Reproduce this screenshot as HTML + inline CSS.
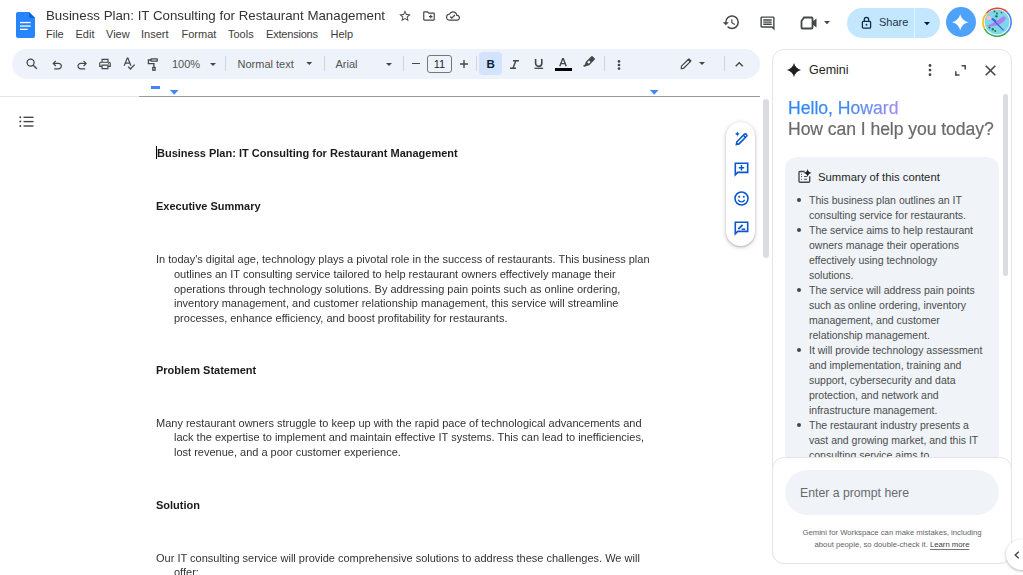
<!DOCTYPE html>
<html><head><meta charset="utf-8">
<style>
*{margin:0;padding:0;box-sizing:border-box}
html,body{width:1023px;height:575px;overflow:hidden;background:#fff;font-family:"Liberation Sans",sans-serif;color:#1f1f1f}
.a{position:absolute;white-space:nowrap}
svg{position:absolute;overflow:visible}
#title{left:46px;top:8px;font-size:13.3px;line-height:16px;color:#333;will-change:transform}
.mn{position:absolute;top:28.4px;font-size:11px;line-height:13px;color:#3c3c3c}
#toolbar{left:12px;top:49px;width:748px;height:30px;border-radius:15px;background:#eef2fa}
.tb{position:absolute;font-size:11px;line-height:13px;color:#505352}
.sep{position:absolute;width:1px;height:14.5px;background:#d2d5da;top:56.3px}
#ruler{left:0;top:96px;width:760px;height:1px;background:#dadce0}
.doc{font-size:11px;color:#333;will-change:transform;line-height:14.5px}
.h{font-weight:bold;color:#1a1a1a}
#gp{left:772px;top:48.7px;width:240px;height:515.3px;border:1px solid #e6e6e6;border-radius:12px;background:#fff}
</style></head><body>

<!-- Docs logo -->
<svg style="left:16px;top:12px" width="19" height="26" viewBox="0 0 19 26">
 <path d="M2 0h11l6 6v18a2 2 0 0 1-2 2H2a2 2 0 0 1-2-2V2a2 2 0 0 1 2-2z" fill="#2684fc"/>
 <path d="M13 0l6 6h-4a2 2 0 0 1-2-2z" fill="#0066da"/>
 <rect x="4" y="9.9" width="10.7" height="1.3" fill="#fff"/>
 <rect x="4" y="13.4" width="10.7" height="1.3" fill="#fff"/>
 <rect x="4" y="16.7" width="7.7" height="1.3" fill="#fff"/>
</svg>
<div class="a" id="title">Business Plan: IT Consulting for Restaurant Management</div>
<div class="mn" style="left:46px">File</div>
<div class="mn" style="left:75.5px">Edit</div>
<div class="mn" style="left:106px">View</div>
<div class="mn" style="left:141px">Insert</div>
<div class="mn" style="left:181.5px">Format</div>
<div class="mn" style="left:228px">Tools</div>
<div class="mn" style="left:266px;letter-spacing:-0.2px">Extensions</div>
<div class="mn" style="left:330.5px">Help</div>

<!-- title icons -->
<svg style="left:398px;top:9px" width="14" height="14" viewBox="0 0 24 24"><path fill="#444746" d="M22 9.24l-7.19-.62L12 2 9.19 8.63 2 9.24l5.46 4.73L5.82 21 12 17.27 18.18 21l-1.63-7.03L22 9.24zM12 15.4l-3.76 2.27 1-4.28-3.32-2.88 4.38-.38L12 6.1l1.71 4.04 4.38.38-3.32 2.88 1 4.28L12 15.4z"/></svg>
<svg style="left:422px;top:9px" width="14" height="14" viewBox="0 0 24 24"><path fill="#444746" d="M20 6h-8l-2-2H4c-1.1 0-2 .9-2 2v12c0 1.1.9 2 2 2h16c1.1 0 2-.9 2-2V8c0-1.1-.9-2-2-2zm0 12H4V6h5.17l2 2H20v10zm-8-4h2v2h2v-2h2v-2h-2v-2h-2v2h-2z"/></svg>
<svg style="left:446px;top:9px" width="14" height="14" viewBox="0 0 24 24"><path fill="#444746" d="M19.35 10.04A7.49 7.49 0 0 0 12 4C9.11 4 6.6 5.64 5.35 8.04A5.994 5.994 0 0 0 0 14c0 3.31 2.69 6 6 6h13c2.76 0 5-2.24 5-5 0-2.64-2.05-4.78-4.65-4.96zM19 18H6c-2.21 0-4-1.79-4-4 0-2.05 1.53-3.76 3.56-3.97l1.07-.11.5-.95A5.469 5.469 0 0 1 12 6c2.62 0 4.88 1.86 5.39 4.43l.3 1.5 1.53.11A2.98 2.98 0 0 1 22 15c0 1.65-1.35 3-3 3zm-9-3.82l-2.09-2.09L6.5 13.5 10 17l6.01-6.01-1.41-1.41z"/></svg>

<!-- header right -->
<svg style="left:721.5px;top:13px" width="18.5" height="18.5" viewBox="0 0 24 24"><path fill="#444746" d="M13 3a9 9 0 0 0-9 9H1l3.89 3.89.07.14L9 12H6c0-3.87 3.13-7 7-7s7 3.13 7 7-3.13 7-7 7c-1.93 0-3.68-.79-4.94-2.06l-1.42 1.42A8.954 8.954 0 0 0 13 21a9 9 0 0 0 0-18zm-1 5v5l4.28 2.54.72-1.21-3.5-2.08V8H12z"/></svg>
<svg style="left:759px;top:15px" width="17" height="17" viewBox="0 0 24 24"><path fill="#444746" d="M21.99 4c0-1.1-.89-2-1.99-2H4c-1.1 0-2 .9-2 2v12c0 1.1.9 2 2 2h14l4 4-.01-18zM20 4v13.17L18.83 16H4V4h16zM6 12h12v2H6zm0-3h12v2H6zm0-3h12v2H6z"/></svg>
<svg style="left:800px;top:16px" width="18" height="14" viewBox="0 0 18 14"><path fill="none" stroke="#444746" stroke-width="1.8" d="M4 1.5h7.5a1 1 0 0 1 1 1v9a1 1 0 0 1-1 1h-9a1 1 0 0 1-1-1V5z"/><path fill="#444746" d="M12.5 5.5l4-3v9l-4-3z"/></svg>
<svg style="left:824px;top:21px" width="6" height="4" viewBox="0 0 6 4"><path fill="#444746" d="M0 0h6L3 3.3z"/></svg>

<div class="a" style="left:847px;top:7.5px;width:93px;height:30px;border-radius:15px;background:#c2e7ff"></div>
<div class="a" style="left:914px;top:7.5px;width:1px;height:30px;background:#e3f4ff"></div>
<svg style="left:861px;top:16px" width="11" height="13" viewBox="0 0 11 13"><rect x="1.4" y="5.4" width="8.2" height="6.7" rx="0.9" fill="none" stroke="#0f2a45" stroke-width="1.25"/><path d="M3.3 5.4V3.6a2.2 2.2 0 0 1 4.4 0v1.8" fill="none" stroke="#0f2a45" stroke-width="1.25"/><circle cx="5.5" cy="8.7" r="0.9" fill="#0f2a45"/></svg>
<div class="a" style="left:879px;top:16.4px;font-size:11px;line-height:13px;color:#263548">Share</div>
<svg style="left:924px;top:21.5px" width="6" height="4" viewBox="0 0 6 4"><path fill="#001d35" d="M0 0h6L3 3.3z"/></svg>

<div class="a" style="left:946px;top:7.1px;width:30px;height:30px;border-radius:50%;background:#4fa2fa"></div>
<svg style="left:952.4px;top:14.1px" width="16.4" height="16.4" viewBox="0 0 16 16"><path fill="#fff" d="M8 0C8.8 4 12 7.2 16 8 12 8.8 8.8 12 8 16 7.2 12 4 8.8 0 8 4 7.2 7.2 4 8 0z"/></svg>

<!-- avatar -->
<svg style="left:982px;top:7.2px" width="30" height="30" viewBox="0 0 30 30">
 <path d="M4.6 6.2A14.2 14.2 0 0 1 24.8 4.8" fill="none" stroke="#ea4335" stroke-width="1.6"/>
 <path d="M24.8 4.8A14.2 14.2 0 0 1 24.4 25.6" fill="none" stroke="#4285f4" stroke-width="1.6"/>
 <path d="M24.4 25.6A14.2 14.2 0 0 1 2.4 21.5" fill="none" stroke="#34a853" stroke-width="1.6"/>
 <path d="M2.4 21.5A14.2 14.2 0 0 1 4.6 6.2" fill="none" stroke="#fbbc04" stroke-width="1.6"/>
 <circle cx="15" cy="15" r="12.4" fill="#7fd5ea"/>
 <circle cx="6.8" cy="11" r="2.3" fill="#f7bddb"/>
 <path d="M4 18.5C9 17.8 13 15.5 19.5 10.5 22.5 8.5 24.8 9.8 23.2 12.8 20 17.5 13 20.5 4 18.5z" fill="#b07cf0"/>
 <path d="M10 11.8l11.5 11.6" stroke="#3b62d8" stroke-width="1.3"/>
 <path d="M10 11.5l4 3" stroke="#2f6be0" stroke-width="2"/>
 <g fill="#1e7d3a"><circle cx="12.5" cy="4.6" r="1"/><circle cx="15" cy="6.5" r="1.1"/><circle cx="14.4" cy="9.3" r="1.2"/><circle cx="19.5" cy="5.6" r="0.9"/><circle cx="7.5" cy="20.5" r="1.1"/><circle cx="10.8" cy="22.2" r="1.2"/><circle cx="13.2" cy="24" r="1"/></g>
</svg>

<div class="a" id="toolbar"></div>

<!-- toolbar content -->
<svg style="left:26px;top:58px" width="12" height="12" viewBox="0 0 12 12"><circle cx="4.6" cy="4.6" r="3.5" fill="none" stroke="#444746" stroke-width="1.3"/><path d="M7.2 7.2l3.6 3.6" stroke="#444746" stroke-width="1.4"/></svg>
<svg style="left:50.3px;top:58px" width="14.4" height="14.4" viewBox="0 -960 960 960"><path fill="#444746" d="M280-200v-80h284q63 0 109.5-40T720-420q0-60-46.5-100T564-560H312l104 104-56 56-200-200 200-200 56 56-104 104h252q97 0 166.5 63T800-420q0 94-69.5 157T564-200H280Z"/></svg>
<svg style="left:74.5px;top:58px" width="14.4" height="14.4" viewBox="0 -960 960 960"><path fill="#444746" d="M396-200q-97 0-166.5-63T160-420q0-94 69.5-157T396-640h252L544-744l56-56 200 200-200 200-56-56 104-104H396q-63 0-109.5 40T240-420q0 60 46.5 100T396-280h284v80H396Z"/></svg>
<svg style="left:98px;top:57px" width="14" height="14" viewBox="0 -960 960 960"><path fill="#444746" d="M640-640v-120H320v120h-80v-200h480v200h-80Zm-480 80h640-640Zm560 100q17 0 28.5-11.5T760-500q0-17-11.5-28.5T720-540q-17 0-28.5 11.5T680-500q0 17 11.5 28.5T720-460Zm-80 260v-160H320v160h320Zm80 80H240v-160H80v-240q0-51 35-85.5t85-34.5h560q51 0 85.5 34.5T880-520v240H720v160Zm80-240v-160q0-17-11.5-28.5T760-560H200q-17 0-28.5 11.5T160-520v160h80v-80h480v80h80Z"/></svg>
<svg style="left:123px;top:57px" width="13" height="14" viewBox="0 0 13 14"><path fill="none" stroke="#444746" stroke-width="1.2" d="M1.2 8.8L4.3 1.1h.6l3 7.7M2.4 6.1h4.4"/><path fill="none" stroke="#444746" stroke-width="1.3" d="M5.2 9.6l2.2 2.4 4.2-4.4"/></svg>
<svg style="left:146px;top:57px" width="13" height="14" viewBox="0 0 13 14"><rect x="5" y="1.9" width="6.3" height="2.2" rx="0.4" fill="none" stroke="#444746" stroke-width="1.3"/><path fill="none" stroke="#444746" stroke-width="1.3" d="M5 3H2.4V6.7H7.9V10.2"/><rect x="6.8" y="10.5" width="2.3" height="2.7" fill="none" stroke="#444746" stroke-width="1.3"/></svg>
<div class="tb" style="left:172px;top:58px">100%</div>
<svg style="left:209.5px;top:63px" width="6" height="3" viewBox="0 0 6 3"><path fill="#444746" d="M0 0h6L3 3z"/></svg>
<div class="sep" style="left:225px"></div>
<div class="tb" style="left:237.5px;top:58px">Normal text</div>
<svg style="left:306px;top:62.3px" width="6.5" height="3" viewBox="0 0 6 3"><path fill="#444746" d="M0 0h6L3 3z"/></svg>
<div class="sep" style="left:323.5px"></div>
<div class="tb" style="left:335.5px;top:58px">Arial</div>
<svg style="left:386px;top:62.5px" width="6" height="3" viewBox="0 0 6 3"><path fill="#444746" d="M0 0h6L3 3z"/></svg>
<div class="sep" style="left:403px"></div>
<div class="a" style="left:412px;top:63px;width:7.5px;height:1.4px;background:#444746"></div>
<div class="a" style="left:427px;top:55px;width:25px;height:17.5px;border:1px solid #747775;border-radius:3px"></div>
<div class="tb" style="left:427px;top:58px;width:25px;text-align:center;color:#1f1f1f">11</div>
<svg style="left:460px;top:60px" width="8" height="8" viewBox="0 0 8 8"><path d="M4 0v8M0 4h8" stroke="#444746" stroke-width="1.4"/></svg>
<div class="sep" style="left:476px"></div>
<div class="a" style="left:479.2px;top:52px;width:22.6px;height:22.5px;border-radius:4px;background:#d3e3fd"></div>
<div class="tb" style="left:479.5px;top:57.5px;width:22.5px;text-align:center;font-weight:bold;color:#0b1d3a;font-size:11.5px">B</div>
<svg style="left:510px;top:59.5px" width="9" height="9" viewBox="0 0 9 9"><path d="M3 0.8h6M0 8.2h6M5.8 0.8L3 8.2" fill="none" stroke="#444746" stroke-width="1.4"/></svg>
<svg style="left:533.8px;top:59.3px" width="9.5" height="11" viewBox="0 0 9.5 11"><path d="M1.6 0v4.3a3.1 3.1 0 0 0 6.2 0V0" fill="none" stroke="#444746" stroke-width="1.6"/><path d="M0.5 9.3h8.6" stroke="#444746" stroke-width="1.3"/></svg>
<svg style="left:559px;top:58.3px" width="8" height="9" viewBox="0 0 8 9"><path d="M0.8 8.2L3.7 0.6h0.6l2.9 7.6M2 5.6h4" fill="none" stroke="#444746" stroke-width="1.45"/></svg>
<div class="a" style="left:555px;top:68px;width:16.5px;height:3px;background:#000"></div>
<svg style="left:578px;top:52px" width="22" height="20" viewBox="0 0 22 20"><g transform="translate(11.4 9.6) rotate(45)"><path fill="#444746" d="M-2.4-5.2a.8.8 0 0 1 .8-.8h3.2a.8.8 0 0 1 .8.8V2.6L1.2 5H-1.2L-2.4 2.6z"/><rect x="-1.1" y="-0.6" width="2.2" height="2.6" fill="#eef2fa"/><path fill="#444746" d="M-1.2 4.6H1.2L.2 7.2H-1.2z"/></g><path fill="#444746" d="M5.4 13.5h3.2l-1.2 .7H5z"/></svg>
<div class="sep" style="left:604px"></div>
<svg style="left:617px;top:59.5px" width="4" height="10" viewBox="0 0 4 10"><circle cx="2" cy="1.4" r="1.3" fill="#444746"/><circle cx="2" cy="5" r="1.3" fill="#444746"/><circle cx="2" cy="8.6" r="1.3" fill="#444746"/></svg>
<svg style="left:672px;top:52px" width="26" height="24" viewBox="0 0 26 24"><g transform="translate(13.6 12.2) rotate(45) scale(0.93)"><path d="M-1.6-5.6h3.2v10.2L0 6.6-1.6 4.6z" fill="none" stroke="#444746" stroke-width="1.3" stroke-linejoin="round"/><rect x="-2.1" y="-7.3" width="4.2" height="2.6" rx="0.6" fill="#444746"/></g></svg>
<svg style="left:699px;top:62.3px" width="6" height="3" viewBox="0 0 6 3"><path fill="#444746" d="M0 0h6L3 3z"/></svg>
<div class="sep" style="left:724px"></div>
<svg style="left:735px;top:62px" width="8.5" height="5" viewBox="0 0 8.5 5"><path d="M0.7 4.3L4.25 0.8 7.8 4.3" fill="none" stroke="#444746" stroke-width="1.4"/></svg>

<!-- ruler marks -->
<div class="a" style="left:151px;top:86px;width:9px;height:3px;background:#4285f4"></div>
<svg style="left:169.5px;top:89.5px" width="8.5" height="4.8" viewBox="0 0 8 4.5"><path fill="#4285f4" d="M0 0h8L4 4.5z"/></svg>
<svg style="left:650px;top:89.5px" width="8.5" height="4.8" viewBox="0 0 8 4.5"><path fill="#4285f4" d="M0 0h8L4 4.5z"/></svg>
<div class="a" style="left:0;top:95.5px;width:139px;height:1px;background:#e6e6e6"></div>
<div class="a" style="left:139px;top:95.5px;width:621px;height:1.2px;background:#9a9a9a"></div>

<!-- outline icon -->
<svg style="left:18.5px;top:115.5px" width="15" height="11" viewBox="0 0 15 11"><g fill="#444746"><circle cx="1.3" cy="1.3" r="1"/><circle cx="1.3" cy="5.6" r="1"/><circle cx="1.3" cy="10" r="1"/><rect x="4.5" y="0.6" width="10" height="1.4"/><rect x="4.5" y="4.9" width="10" height="1.4"/><rect x="4.5" y="9.3" width="10" height="1.4"/></g></svg>
<div class="a" style="left:155.8px;top:146.4px;width:1.4px;height:13px;background:#000"></div>

<!-- Document -->
<div class="a doc h" style="left:156.6px;top:146px">Business Plan: IT Consulting for Restaurant Management</div>
<div class="a doc h" style="left:156px;top:199.3px">Executive Summary</div>
<div class="a doc" style="left:156px;top:252px">In today's digital age, technology plays a pivotal role in the success of restaurants. This business plan</div>
<div class="a doc" style="left:174px;top:266.5px">outlines an IT consulting service tailored to help restaurant owners effectively manage their<br>operations through technology solutions. By addressing pain points such as online ordering,<br>inventory management, and customer relationship management, this service will streamline<br>processes, enhance efficiency, and boost profitability for restaurants.</div>
<div class="a doc h" style="left:156px;top:363px">Problem Statement</div>
<div class="a doc" style="left:156px;top:415.5px">Many restaurant owners struggle to keep up with the rapid pace of technological advancements and</div>
<div class="a doc" style="left:174px;top:430px">lack the expertise to implement and maintain effective IT systems. This can lead to inefficiencies,<br>lost revenue, and a poor customer experience.</div>
<div class="a doc h" style="left:156px;top:497.5px">Solution</div>
<div class="a doc" style="left:156px;top:550.5px">Our IT consulting service will provide comprehensive solutions to address these challenges. We will</div>
<div class="a doc" style="left:174px;top:565px">offer:</div>

<!-- Gemini panel -->
<div class="a" id="gp"></div>
<svg style="left:786.8px;top:63px" width="14" height="14" viewBox="0 0 16 16"><path fill="#1f1f1f" d="M8 0C8.9 3.9 12.1 7.1 16 8 12.1 8.9 8.9 12.1 8 16 7.1 12.1 3.9 8.9 0 8 3.9 7.1 7.1 3.9 8 0z"/></svg>
<div class="a" style="left:809px;top:62.5px;font-size:12.5px;line-height:15px;color:#1f1f1f">Gemini</div>
<svg style="left:928px;top:64.2px" width="4" height="12" viewBox="0 0 4 12"><circle cx="2" cy="1.5" r="1.4" fill="#444746"/><circle cx="2" cy="6.1" r="1.4" fill="#444746"/><circle cx="2" cy="10.7" r="1.4" fill="#444746"/></svg>
<svg style="left:954.5px;top:65px" width="11" height="11" viewBox="0 0 11 11"><path d="M6.6 0.8h3.6v3.8M0.8 6.2v3.8h3.7" fill="none" stroke="#444746" stroke-width="1.5"/></svg>
<svg style="left:984.7px;top:64.8px" width="11" height="11" viewBox="0 0 11 11"><path d="M0.7 0.7l9.6 9.6M10.3 0.7L0.7 10.3" stroke="#444746" stroke-width="1.6"/></svg>
<div class="a" style="left:1002.5px;top:93.5px;width:5px;height:182px;border-radius:3px;background:#dadce0"></div>

<div class="a" style="left:788px;top:98px;font-size:17.6px;line-height:20px"><span style="background:linear-gradient(90deg,#2b86f7 0%,#3a8af5 50%,#6f8cf0 75%,#a58ef0 100%);-webkit-text-stroke:0.25px transparent;-webkit-background-clip:text;background-clip:text;color:transparent">Hello, Howard</span></div>
<div class="a" style="left:788px;top:119.2px;font-size:17.6px;line-height:20px;color:#6a6a6a;will-change:transform;-webkit-text-stroke:0.2px #6a6a6a;letter-spacing:-0.07px">How can I help you today?</div>

<div class="a" style="left:785px;top:157px;width:214px;height:320px;border-radius:12px;background:#f0f4f9"></div>
<svg style="left:792px;top:164px" width="22" height="22" viewBox="0 0 22 22"><path fill="none" stroke="#444746" stroke-width="1.35" d="M12.7 7.5H8a1 1 0 0 0-1 1v8.7a1 1 0 0 0 1 1h8.7a1 1 0 0 0 1-1V12.2"/><g fill="#444746"><rect x="9" y="9.8" width="1" height="0.9"/><rect x="9" y="12.1" width="1" height="0.9"/><rect x="9" y="14.8" width="1" height="0.9"/><rect x="12" y="12.1" width="3" height="0.9"/><rect x="12" y="14.8" width="3" height="0.9"/></g><path fill="#1f1f1f" d="M15.6 4.8C15.9 7.2 16.9 8.3 19.6 9 16.9 9.7 15.9 10.8 15.6 13.2 15.3 10.8 14.3 9.7 11.6 9 14.3 8.3 15.3 7.2 15.6 4.8z"/></svg>
<div class="a" style="left:818px;top:170.9px;font-size:11.3px;line-height:13px;color:#1f1f1f">Summary of this content</div>
<div class="a" id="sum" style="left:809px;top:193.2px;font-size:10.5px;line-height:15px;color:#4a4c4b">This business plan outlines an IT<br>consulting service for restaurants.<br>The service aims to help restaurant<br>owners manage their operations<br>effectively using technology<br>solutions.<br>The service will address pain points<br>such as online ordering, inventory<br>management, and customer<br>relationship management.<br>It will provide technology assessment<br>and implementation, training and<br>support, cybersecurity and data<br>protection, and network and<br>infrastructure management.<br>The restaurant industry presents a<br>vast and growing market, and this IT<br>consulting service aims to</div>
<div class="a" style="left:797px;top:198.3px;width:4px;height:4px;border-radius:50%;background:#444746"></div>
<div class="a" style="left:797px;top:228.3px;width:4px;height:4px;border-radius:50%;background:#444746"></div>
<div class="a" style="left:797px;top:288.3px;width:4px;height:4px;border-radius:50%;background:#444746"></div>
<div class="a" style="left:797px;top:348.3px;width:4px;height:4px;border-radius:50%;background:#444746"></div>
<div class="a" style="left:797px;top:423.3px;width:4px;height:4px;border-radius:50%;background:#444746"></div>

<div class="a" style="left:772px;top:457px;width:240px;height:107px;border:1px solid #e6e6e6;border-radius:12px;background:#fff"></div>
<div class="a" style="left:785px;top:470px;width:214px;height:45px;border-radius:22.5px;background:#f0f4f9"></div>
<div class="a" style="left:800px;top:485.7px;font-size:12.25px;line-height:15px;color:#676a6e">Enter a prompt here</div>
<div class="a" style="left:772px;top:527.2px;width:240px;text-align:center;font-size:7.72px;line-height:11.6px;color:#5f6368">Gemini for Workspace can make mistakes, including<br>about people, so double-check it. <span style="color:#3c4043;text-decoration:underline;text-decoration-color:#777;text-underline-offset:1.6px">Learn more</span></div>
<div class="a" style="left:1005.5px;top:539px;width:32px;height:31px;border-radius:50%;background:#fff;box-shadow:0 1px 3px rgba(0,0,0,.3)"></div>
<svg style="left:1013.5px;top:551px" width="5.5" height="8" viewBox="0 0 5.5 8"><path d="M4.8 0.7L1.2 4l3.6 3.3" fill="none" stroke="#444746" stroke-width="1.4"/></svg>

<!-- page side scrollbar & floating toolbar -->
<div class="a" style="left:763px;top:99px;width:6px;height:159px;border-radius:3px;background:#dadce0"></div>
<div class="a" style="left:726px;top:122px;width:29px;height:123.5px;border-radius:14.5px;background:#fff;box-shadow:0 1px 2px rgba(60,64,67,.3),0 1px 4px 1px rgba(60,64,67,.15)"></div>
<svg style="left:734px;top:131px" width="15" height="15" viewBox="0 0 15 15"><path fill="none" stroke="#0b57d0" stroke-width="1.6" d="M2.4 13.4l.5-2.6 7.6-7.6a1.1 1.1 0 0 1 1.5 0l.6.6a1.1 1.1 0 0 1 0 1.5L5 12.9z"/><path d="M9.4 4.3l2 2" stroke="#0b57d0" stroke-width="1.3"/><path fill="#0b57d0" d="M3.4 0.3c.3 1.5 1.1 2.3 2.6 2.6-1.5.3-2.3 1.1-2.6 2.6C3.1 4 2.3 3.2.8 2.9 2.3 2.6 3.1 1.8 3.4.3z"/></svg>
<svg style="left:734px;top:161.5px" width="15" height="14" viewBox="0 0 15 14"><path fill="none" stroke="#0b57d0" stroke-width="1.6" d="M1.3 1.2h12.4v9.2H3.7L1.3 12.8z"/><path d="M7.5 3.1v5.4M4.8 5.8h5.4" stroke="#0b57d0" stroke-width="1.5"/></svg>
<svg style="left:734px;top:191px" width="15" height="15" viewBox="0 0 15 15"><circle cx="7.5" cy="7.5" r="6.5" fill="none" stroke="#0b57d0" stroke-width="1.6"/><circle cx="5.2" cy="5.8" r="1.05" fill="#0b57d0"/><circle cx="9.8" cy="5.8" r="1.05" fill="#0b57d0"/><path d="M4.3 8.8a3.5 3.5 0 0 0 6.4 0" fill="none" stroke="#0b57d0" stroke-width="1.4"/></svg>
<svg style="left:734px;top:221px" width="15" height="14" viewBox="0 0 15 14"><path fill="none" stroke="#0b57d0" stroke-width="1.6" d="M1.3 1.2h12.4v9.2H3.7L1.3 12.8z"/><path d="M4.3 8.2l4.3-4.3" stroke="#0b57d0" stroke-width="1.8"/><path d="M7.6 8.2h3.6" stroke="#0b57d0" stroke-width="1.5"/></svg>

</body></html>
